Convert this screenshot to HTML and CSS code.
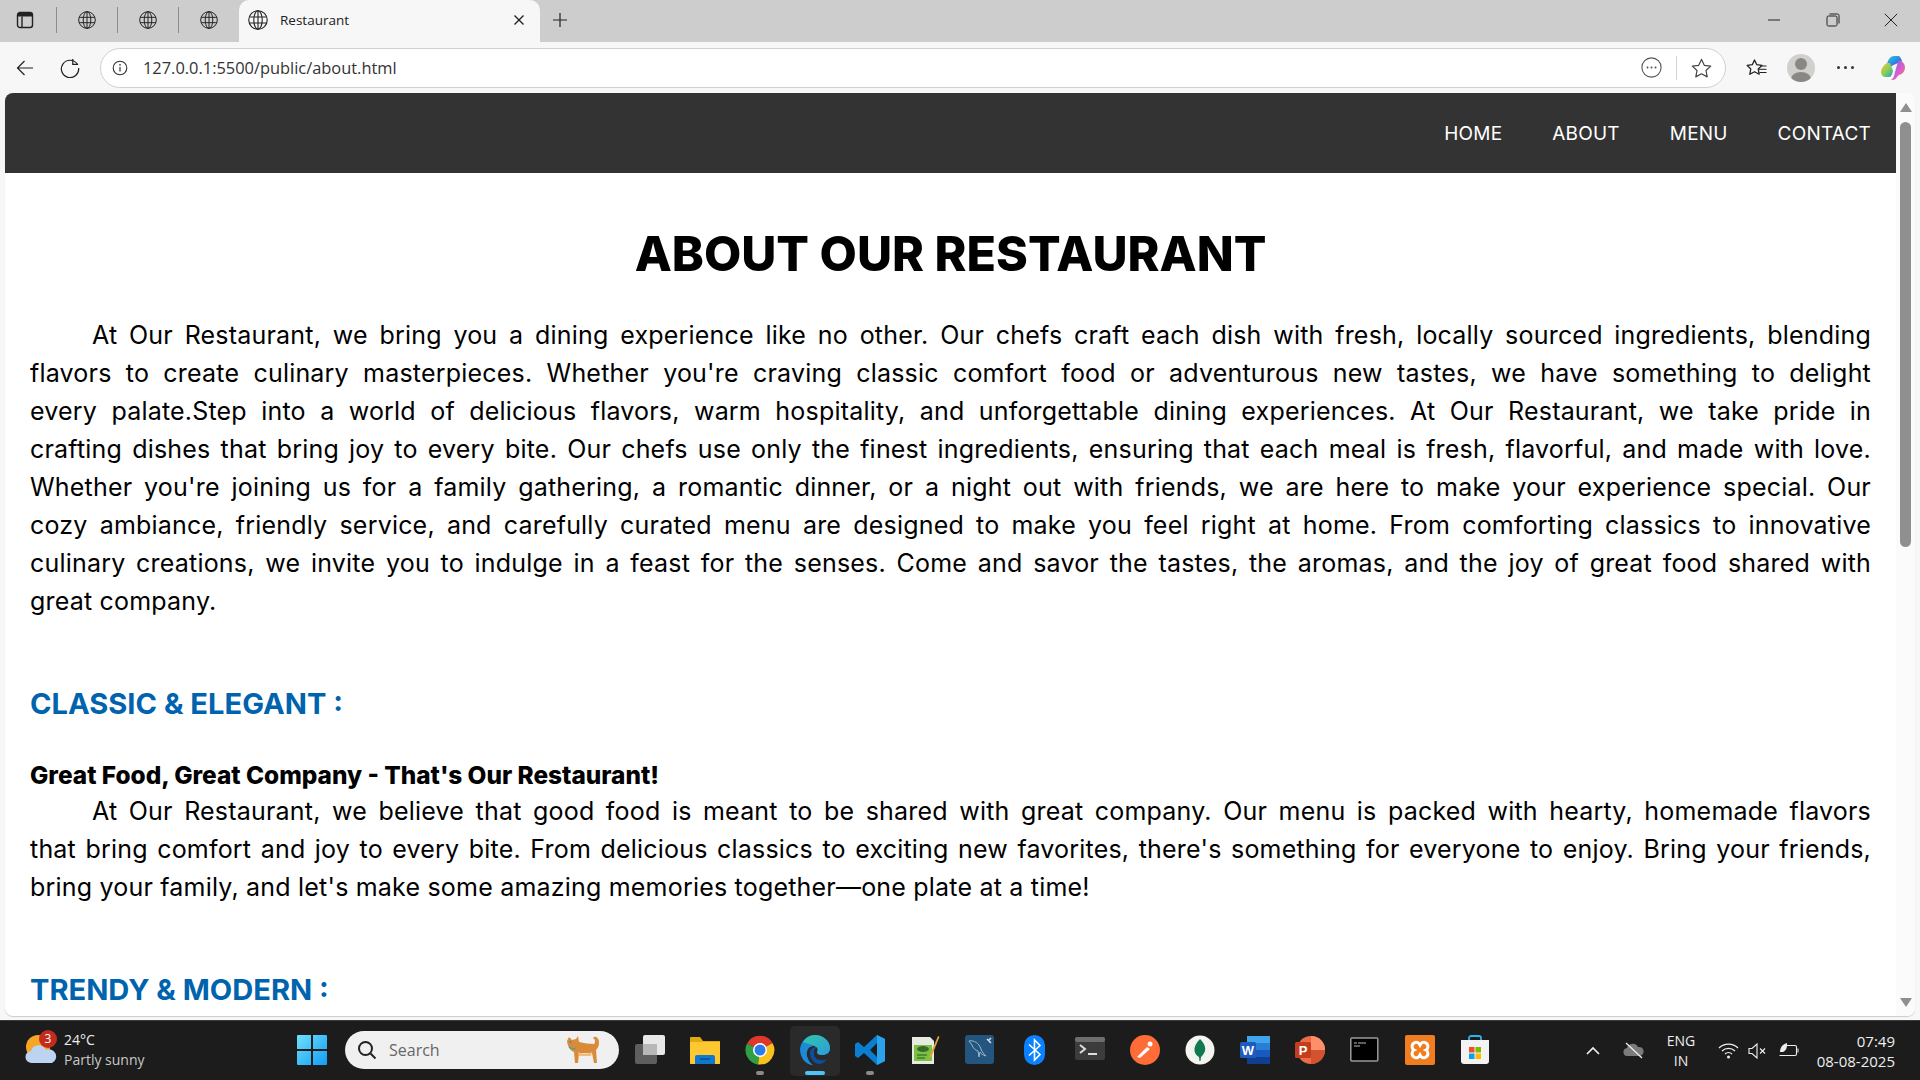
FILE: index.html
```html
<!DOCTYPE html>
<html lang="en">

<head>
    <meta charset="UTF-8">
    <meta name="viewport" content="width=device-width, initial-scale=1.0">
    <title>Restaurant</title>
    <link rel="stylesheet" href="styles.css">
</head>

<body>

    <div class="tabstrip">
        <div class="tab-mini">
            <svg width="18" height="18" viewBox="0 0 18 18"><rect x="1.5" y="1.5" width="15" height="15" rx="2.5" fill="none" stroke="#222" stroke-width="1.4"/><path d="M2 2h14v3.5H2z" fill="#222"/><path d="M6 5.5v11" stroke="#222" stroke-width="1.4"/></svg>
        </div>
        <div class="tab-mini sep">
            <svg class="globe" width="18" height="18" viewBox="0 0 18 18"><use href="#globe"/></svg>
        </div>
        <div class="tab-mini sep">
            <svg class="globe" width="18" height="18" viewBox="0 0 18 18"><use href="#globe"/></svg>
        </div>
        <div class="tab-mini sep">
            <svg class="globe" width="18" height="18" viewBox="0 0 18 18"><use href="#globe"/></svg>
        </div>
        <div class="tab-active">
            <svg class="globe" width="20" height="20" viewBox="0 0 18 18">
                <symbol id="globe" viewBox="0 0 18 18"><g fill="none" stroke="#222" stroke-width="1"><circle cx="9" cy="9" r="8.3"/><ellipse cx="9" cy="9" rx="3.8" ry="8.3"/><path d="M9 .7v16.600M1.300 6.300h15.400M1.300 11.700h15.400"/></g></symbol>
                <use href="#globe"/>
            </svg>
            <span class="tab-title">Restaurant</span>
            <svg width="12" height="12" viewBox="0 0 12 12"><path d="M1.500 1.500l9 9M10.500 1.500l-9 9" stroke="#222" stroke-width="1.400"/></svg>
        </div>
        <svg class="new-tab" width="16" height="16" viewBox="0 0 16 16"><path d="M8 1v14M1 8h14" stroke="#222" stroke-width="1.200"/></svg>
        <div class="win-btns">
            <svg width="14" height="14" viewBox="0 0 14 14"><path d="M1 7h12" stroke="#222" stroke-width="1"/></svg>
            <svg width="14" height="14" viewBox="0 0 14 14"><rect x="1" y="3" width="10" height="10" rx="1.500" fill="none" stroke="#222"/><path d="M3.500 1h8a1.500 1.500 0 0 1 1.500 1.500v8" fill="none" stroke="#222"/></svg>
            <svg width="14" height="14" viewBox="0 0 14 14"><path d="M.8.8l12.400 12.400M13.200.8L.8 13.200" stroke="#222"/></svg>
        </div>
    </div>

    <div class="toolbar">
        <svg class="tool-back" width="18" height="18" viewBox="0 0 18 18"><path d="M17 9H1.500M8.500 2L1.500 9l7 7" fill="none" stroke="#222" stroke-width="1.200"/></svg>
        <svg class="tool-reload" width="20" height="20" viewBox="0 0 18 18"><path d="M15.600 5.600A7.800 7.800 0 1 0 16.800 9" fill="none" stroke="#222" stroke-width="1.100"/><path d="M11.500 1v4.800h4.800" fill="none" stroke="#222" stroke-width="1.100"/></svg>
        <div class="address">
            <svg width="16" height="16" viewBox="0 0 16 16"><circle cx="8" cy="8" r="6.800" fill="none" stroke="#333" stroke-width="1.100"/><path d="M8 7v4.400" stroke="#333" stroke-width="1.200"/><circle cx="8" cy="4.900" r=".8" fill="#333"/></svg>
            <span class="url">127.0.0.1:5500/public/about.html</span>
            <svg class="addr-more" width="21" height="21" viewBox="0 0 21 21"><circle cx="10.500" cy="10.500" r="9.600" fill="none" stroke="#555" stroke-width="1.100"/><circle cx="6.500" cy="10.500" r="1" fill="#555"/><circle cx="10.500" cy="10.500" r="1" fill="#555"/><circle cx="14.500" cy="10.500" r="1" fill="#555"/></svg>
            <span class="addr-sep"></span>
            <svg width="21" height="20" viewBox="0 0 21 20"><path d="M10.500 1.400l2.800 5.900 6.400.8-4.700 4.400 1.200 6.400-5.700-3.100-5.700 3.100 1.200-6.400L1.300 8.100l6.400-.8z" fill="none" stroke="#444" stroke-width="1.200" stroke-linejoin="round"/></svg>
        </div>
        <svg class="tool-fav" width="21" height="20" viewBox="0 0 21 20"><path d="M8.500 2l2.300 4.700 5.200.7-3.800 3.600 1 5.200-4.700-2.500-4.700 2.500 1-5.200L1.100 7.400l5.200-.7z" fill="none" stroke="#222" stroke-width="1.300" stroke-linejoin="round"/><path d="M14 8h6.500M13 11.300h7.500M13.500 14.500h7" stroke="#222"/></svg>
        <div class="avatar"><span class="avatar-head"></span><span class="avatar-body"></span></div>
        <div class="dots"><i></i><i></i><i></i></div>
        <svg class="copilot" width="28" height="28" viewBox="0 0 28 28">
            <defs>
                <linearGradient id="cpa" x1="0" y1="0" x2="1" y2="1"><stop offset="0" stop-color="#37c6e8"/><stop offset=".6" stop-color="#2a7de1"/><stop offset="1" stop-color="#1b4fb8"/></linearGradient>
                <linearGradient id="cpb" x1="0" y1="0" x2="1" y2="1"><stop offset="0" stop-color="#f9c23c"/><stop offset=".5" stop-color="#8cd050"/><stop offset="1" stop-color="#20a0c8"/></linearGradient>
                <linearGradient id="cpc" x1="0" y1="0" x2="1" y2="1"><stop offset="0" stop-color="#8a5ce6"/><stop offset=".6" stop-color="#d95fc8"/><stop offset="1" stop-color="#f9864a"/></linearGradient>
            </defs>
            <path d="M8 10c1-4 3-8 7-8h4c2 0 3 2 4 5l-6 3c-3 1-5 2-6 4z" fill="url(#cpa)"/>
            <path d="M8 9c-2 1-6 5-6 9 0 3 2 5 5 5h3c2 0 3-2 4-6l-3-8z" fill="url(#cpb)"/>
            <path d="M20 6c3 1 6 4 6 7 0 4-2 7-6 8-2 1-3 5-6 5h-2c2-1 3-3 4-8l2-7z" fill="url(#cpc)"/>
        </svg>
    </div>

    <div class="viewport">
        <div class="page">
            <nav class="navbar">
                <a href="#">HOME</a>
                <a href="#">ABOUT</a>
                <a href="#">MENU</a>
                <a href="#">CONTACT</a>
            </nav>

            <main class="about">
                <h1>ABOUT OUR RESTAURANT</h1>
                <p class="indent">At Our Restaurant, we bring you a dining experience like no other. Our chefs craft each dish with fresh, locally sourced ingredients, blending<br>
                flavors to create culinary masterpieces. Whether you're craving classic comfort food or adventurous new tastes, we have something to delight<br>
                every palate.Step into a world of delicious flavors, warm hospitality, and unforgettable dining experiences. At Our Restaurant, we take pride in<br>
                crafting dishes that bring joy to every bite. Our chefs use only the finest ingredients, ensuring that each meal is fresh, flavorful, and made with love.<br>
                Whether you're joining us for a family gathering, a romantic dinner, or a night out with friends, we are here to make your experience special. Our<br>
                cozy ambiance, friendly service, and carefully curated menu are designed to make you feel right at home. From comforting classics to innovative<br>
                culinary creations, we invite you to indulge in a feast for the senses. Come and savor the tastes, the aromas, and the joy of great food shared with
                <span class="tail">great company.</span></p>

                <h2>CLASSIC &amp; ELEGANT :</h2>
                <h3>Great Food, Great Company - That's Our Restaurant!</h3>
                <p class="indent">At Our Restaurant, we believe that good food is meant to be shared with great company. Our menu is packed with hearty, homemade flavors<br>
                that bring comfort and joy to every bite. From delicious classics to exciting new favorites, there's something for everyone to enjoy. Bring your friends,
                <span class="tail">bring your family, and let's make some amazing memories together—one plate at a time!</span></p>

                <h2>TRENDY &amp; MODERN :</h2>
            </main>
        </div>
        <div class="scrollbar">
            <span class="arrow-up"></span>
            <div class="track"><div class="thumb"></div></div>
            <span class="arrow-down"></span>
        </div>
    </div>

    <footer class="taskbar">
        <div class="weather">
            <svg width="34" height="36" viewBox="0 0 34 36">
                <circle cx="14" cy="15" r="12" fill="#f5a623"/>
                <path d="M8 31a6 6 0 0 1-1-12 8 8 0 0 1 15-1 6.500 6.500 0 0 1 6 13z" fill="#bcd4f2"/>
            </svg>
            <span class="badge">3</span>
            <div class="weather-text">
                <span>24°C</span>
                <span class="weather-sub">Partly sunny</span>
            </div>
        </div>
        <div class="task-center">
            <svg class="task-icon win" width="30" height="30" viewBox="0 0 30 30">
                <defs><linearGradient id="winb" x1="0" y1="0" x2="1" y2="1"><stop offset="0" stop-color="#6fe0fb"/><stop offset="1" stop-color="#119cf5"/></linearGradient></defs>
                <path d="M0 1a1 1 0 0 1 1-1h13v14H0zM16 0h13a1 1 0 0 1 1 1v13H16zM0 16h14v14H1a1 1 0 0 1-1-1zM16 16h14v13a1 1 0 0 1-1 1H16z" fill="url(#winb)"/>
            </svg>
            <div class="search">
                <svg width="20" height="20" viewBox="0 0 20 20"><circle cx="8.500" cy="8.500" r="6.500" fill="none" stroke="#222" stroke-width="2"/><path d="M13 13l5.500 5.500" stroke="#222" stroke-width="2"/></svg>
                <span class="search-label">Search</span>
                <svg class="cat" width="36" height="36" viewBox="0 0 36 36">
                    <path d="M2 9l2-4 3 3 4-1 2-3 1 6c5 1 11 2 15 2 2-2 1-5-1-6 2-3 6 0 6 4 0 4-1 6-3 8l1 13h-3l-2-10H14l-1 10h-3l-1-11c-3-1-6-4-7-11z" fill="#d98b3a"/>
                    <path d="M13 20c5 2 9 2 14 0l-1 4H14z" fill="#f0bd7c"/>
                    <circle cx="5.500" cy="10" r=".9" fill="#2b8cc4"/>
                    <path d="M4 15c2 2 4 2 7 1" fill="none" stroke="#3aa6a6" stroke-width="1.300"/>
                </svg>
            </div>
            <svg class="task-icon" width="30" height="30" viewBox="0 0 30 30">
                <rect x="0" y="9" width="22" height="20" rx="2" fill="#5e5e5e"/>
                <rect x="8" y="0" width="22" height="20" rx="2" fill="#e8e8e8"/>
                <rect x="8" y="9" width="14" height="11" fill="#b8b8b8"/>
            </svg>
            <svg class="task-icon" width="30" height="30" viewBox="0 0 30 30">
                <path d="M0 3a1 1 0 0 1 1-1h9l3 4h17v22a1 1 0 0 1-1 1H1a1 1 0 0 1-1-1z" fill="#e3a90f"/>
                <path d="M0 7h30v21a1 1 0 0 1-1 1H1a1 1 0 0 1-1-1z" fill="#fdc830"/>
                <path d="M5 22a2 2 0 0 1 2-2h16a2 2 0 0 1 2 2v7H5z" fill="#0f79d1"/>
                <path d="M10 24h10" stroke="#0a4f8f" stroke-width="1.500"/>
            </svg>
            <div class="task-slot">
                <svg class="task-icon" width="30" height="30" viewBox="0 0 30 30">
                    <path d="M15 15L27.500 8A14.500 14.500 0 0 0 2 8.500z" fill="#e0372b"/>
                    <path d="M15 15L2 8.500A14.500 14.500 0 0 0 13 29.400z" fill="#2f9e44"/>
                    <path d="M15 15l-2 14.400A14.500 14.500 0 0 0 27.500 8z" fill="#f8c11c"/>
                    <circle cx="15" cy="15" r="7" fill="#fff"/>
                    <circle cx="15" cy="15" r="5.500" fill="#2c7bea"/>
                </svg>
                <i class="run-dot"></i>
            </div>
            <div class="task-slot active">
                <svg class="task-icon" width="30" height="30" viewBox="0 0 30 30">
                    <defs><linearGradient id="edg" x1="0" y1="0" x2="1" y2="1"><stop offset="0" stop-color="#32c7a4"/><stop offset="1" stop-color="#2d9be0"/></linearGradient></defs>
                    <path d="M0 14C1 6 7 0 15 0c8 0 15 6 15 13 0 5-4 7-8 7-3 0-5-1-5-3 2-2 1-6-3-6-5 0-8 4-7 10 1 4 3 7 6 9C6 30 0 23 0 14z" fill="#1c8ad8"/>
                    <path d="M15 0c8 0 15 6 15 13 0 5-4 7-8 7-3 0-5-1-5-3 1-1 1-4-1-5C13 9 7 9 3 7 6 3 10 0 15 0z" fill="url(#edg)"/>
                    <path d="M10 18c0 5 3 9 8 11 4 0 7-2 9-5-3 2-10 2-12-2-1-2-1-4-1-5 0-2 1-4 3-5-4 0-7 2-7 6z" fill="#0d4f9e"/>
                </svg>
                <i class="run-bar"></i>
            </div>
            <div class="task-slot">
                <svg class="task-icon" width="30" height="30" viewBox="0 0 30 30">
                    <path d="M22 0l8 4v22l-8 4-13-12-6 5-3-2V9l3-2 6 5zM22 8l-7 7 7 7z" fill-rule="evenodd" fill="#0a7fd0"/>
                    <path d="M22 0l8 4v22l-8 4z" fill="#2aa3ea"/>
                </svg>
                <i class="run-dot"></i>
            </div>
            <svg class="task-icon" width="30" height="30" viewBox="0 0 30 30">
                <path d="M2 2h18l4 4v23H2z" fill="#e8ece0"/>
                <rect x="4" y="10" width="18" height="16" fill="#7cc142"/>
                <ellipse cx="13" cy="14" rx="6" ry="3" fill="#3b6b2a"/>
                <path d="M19 22L28 1l1.500 .7L21 23z" fill="#d9a441"/>
                <path d="M7 20h10M7 23h8" stroke="#2c5a1e" stroke-width="1.200"/>
            </svg>
            <svg class="task-icon" width="30" height="30" viewBox="0 0 30 30">
                <rect width="29" height="29" rx="3" fill="#23557e"/>
                <path d="M4 6c5-1 10 2 12 8 1 3 3 5 5 7-3-1-5-2-6-4l-1 5-1-6c-3-1-5-3-6-6-1-1-2-3-3-4z" fill="none" stroke="#9db8cd" stroke-width="1"/>
                <path d="M22 4l4 4M26 3l-3 3" stroke="#d5dee5" stroke-width="1.500"/>
            </svg>
            <svg class="task-icon" width="30" height="30" viewBox="0 0 30 30">
                <rect x="4" y="0" width="21" height="30" rx="10.500" fill="#0a82ff"/>
                <path d="M9 9.500l11 10-5.500 5.500V5L20 10.500l-11 10" fill="none" stroke="#fff" stroke-width="1.600"/>
            </svg>
            <svg class="task-icon" width="30" height="30" viewBox="0 0 30 30">
                <rect y="2" width="30" height="23" rx="2" fill="#3c3c3c"/>
                <rect y="2" width="30" height="5" rx="2" fill="#6e6e6e"/>
                <path d="M5 10l5 4-5 4" fill="none" stroke="#ddd" stroke-width="2"/>
                <path d="M13 19h9" stroke="#ddd" stroke-width="2"/>
            </svg>
            <svg class="task-icon" width="30" height="30" viewBox="0 0 30 30">
                <circle cx="15" cy="15" r="15" fill="#ff6c37"/>
                <path d="M7 22l10-10 3 2-10 9z" fill="#fff"/>
                <circle cx="20" cy="9" r="2.500" fill="#fff"/>
            </svg>
            <svg class="task-icon" width="30" height="30" viewBox="0 0 30 30">
                <circle cx="15" cy="15" r="14.500" fill="#f4f4f0"/>
                <path d="M15 4c4 4 6 8 5 12-1 3-3 5-4 6l-.5 4h-1l-.5-4c-2-1-4-3-4.500-6C9 12 11 8 15 4z" fill="#0f7a4e"/>
            </svg>
            <svg class="task-icon" width="30" height="30" viewBox="0 0 30 30">
                <rect x="7" y="1" width="23" height="7" fill="#41a5ee"/>
                <rect x="7" y="8" width="23" height="7" fill="#2b7cd3"/>
                <rect x="7" y="15" width="23" height="7" fill="#185abd"/>
                <rect x="7" y="22" width="23" height="7" fill="#103f91"/>
                <rect y="7" width="16" height="16" rx="1.500" fill="#1f5bbd"/>
                <text class="icon-letter" x="8" y="19.500">W</text>
            </svg>
            <svg class="task-icon" width="30" height="30" viewBox="0 0 30 30">
                <circle cx="16" cy="15" r="14" fill="#ed6c47"/>
                <path d="M16 1a14 14 0 0 1 14 14H16z" fill="#ff8f6b"/>
                <path d="M16 15h14a14 14 0 0 1-14 14z" fill="#d35230"/>
                <rect x="0" y="7" width="16" height="16" rx="1.500" fill="#c43e1c"/>
                <text class="icon-letter" x="8" y="19.500">P</text>
            </svg>
            <svg class="task-icon" width="30" height="30" viewBox="0 0 30 30">
                <rect x=".8" y="3" width="27" height="23" rx="1" fill="#000" stroke="#9a9a9a" stroke-width="1.500"/>
                <path d="M4 8h3M4 11h6M8 8h8" stroke="#bbb"/>
            </svg>
            <svg class="task-icon" width="30" height="30" viewBox="0 0 30 30">
                <rect width="30" height="30" rx="2" fill="#f07d20"/>
                <path d="M9 8c3-2 5 0 6 2 1-2 3-4 6-2 3 2 2 6 0 7 2 1 3 5 0 7-3 2-5 0-6-2-1 2-3 4-6 2-3-2-2-6 0-7-2-1-3-5 0-7z" fill="none" stroke="#fff" stroke-width="3"/>
            </svg>
            <svg class="task-icon" width="30" height="30" viewBox="0 0 30 30">
                <path d="M9 5V3a2 2 0 0 1 2-2h8a2 2 0 0 1 2 2v2" fill="none" stroke="#2ab4ea" stroke-width="1.800"/>
                <path d="M1 5h28v21a3 3 0 0 1-3 3H4a3 3 0 0 1-3-3z" fill="#f3f3f3"/>
                <rect x="9" y="12" width="5.500" height="5.500" fill="#f25022"/>
                <rect x="15.500" y="12" width="5.500" height="5.500" fill="#7fba00"/>
                <rect x="9" y="18.500" width="5.500" height="5.500" fill="#00a4ef"/>
                <rect x="15.500" y="18.500" width="5.500" height="5.500" fill="#ffb900"/>
            </svg>
        </div>
        <div class="tray">
            <svg width="14" height="9" viewBox="0 0 14 9"><path d="M1 8l6-6 6 6" fill="none" stroke="#eee" stroke-width="1.700"/></svg>
            <svg class="tray-cloud" width="21" height="17" viewBox="0 0 21 17"><path d="M5 14a4 4 0 0 1-1-8 6 6 0 0 1 11-1 4.500 4.500 0 0 1 2 9z" fill="#7b7b7b"/><path d="M3 1l16 15" stroke="#eee" stroke-width="1.300"/></svg>
            <div class="lang"><span>ENG</span><span>IN</span></div>
            <div class="tray-icons">
                <svg width="21" height="17" viewBox="0 0 21 17"><g fill="none" stroke="#eee" stroke-width="1.300"><path d="M1 6a13.500 13.500 0 0 1 19 0"/><path d="M4 9a9.300 9.300 0 0 1 13 0"/><path d="M7 12a5 5 0 0 1 7 0"/></g><circle cx="10.500" cy="15" r="1.500" fill="#eee"/></svg>
                <svg width="20" height="16" viewBox="0 0 20 16"><path d="M1 5.500h3L9 1v14l-5-4.500H1z" fill="none" stroke="#eee" stroke-width="1.100"/><path d="M12 5.500l5 5M17 5.500l-5 5" stroke="#eee" stroke-width="1.100"/></svg>
                <svg width="21" height="17" viewBox="0 0 21 17"><path d="M7 3.500h10a1.500 1.500 0 0 1 1.500 1.500v7a1.500 1.500 0 0 1-1.500 1.500H1.500" fill="none" stroke="#eee" stroke-width="1.100"/><path d="M19.500 6.500h1v4h-1" fill="#eee"/><path d="M2 10c0-5 3-8 7-9 0 4 0 7-4 9z" fill="#eee"/></svg>
            </div>
            <div class="clock"><span>07:49</span><span>08-08-2025</span></div>
        </div>
    </footer>

</body>

</html>
```

FILE: styles.css
```css
* {
    box-sizing: border-box;
}

html,
body {
    height: 100%;
}

body {
    margin: 0;
    height: 1080px;
    overflow: hidden;
    display: flex;
    flex-direction: column;
    background-color: #f7f7f7;
    font-family: "Open Sans", "Noto Sans", sans-serif;
}

svg {
    display: block;
    flex-shrink: 0;
}

/* browser tabs */
.tabstrip {
    height: 42px;
    display: flex;
    align-items: center;
    background-color: #cdcdcd;
    padding: 0 0 2px 13px;
}

.tab-mini {
    width: 61px;
    height: 26px;
    display: flex;
    align-items: center;
    padding-left: 21px;
}

.tab-mini.sep {
    border-left: 1px solid #8d8d8d;
}

.tab-mini:first-child {
    width: 43px;
    padding-left: 3px;
}

.tab-active {
    width: 301px;
    height: 42px;
    margin-bottom: -2px;
    display: flex;
    align-items: center;
    padding: 0 15px 2px 9px;
    background-color: #f7f7f7;
    border-radius: 10px 10px 0 0;
}

.tab-title {
    flex: 1;
    margin-left: 12px;
    font-size: 13.5px;
    color: #222;
}

.new-tab {
    margin-left: 12px;
}

.win-btns {
    margin-left: auto;
    width: 190px;
    padding: 0 22px 0 37px;
    display: flex;
    justify-content: space-between;
}

/* address bar */
.toolbar {
    height: 51px;
    display: flex;
    align-items: center;
    padding: 0 13px 0 16px;
}

.tool-back {
    margin-right: 26px;
}

.tool-reload {
    margin-right: 20px;
}

.address {
    flex: 1;
    height: 40px;
    margin-right: 20px;
    display: flex;
    align-items: center;
    gap: 11px;
    padding: 0 13px 0 11px;
    background-color: #fff;
    border: 1px solid #d0d0d0;
    border-radius: 20px;
}

.url {
    flex: 1;
    margin-left: 4px;
    font-size: 16.4px;
    color: #333;
}

.addr-sep {
    width: 1px;
    height: 24px;
    margin: 0 3px;
    background-color: #d5d5d5;
}

.tool-fav {
    margin-right: 20px;
}

.avatar {
    position: relative;
    width: 28px;
    height: 28px;
    margin-right: 22px;
    border-radius: 50%;
    background-color: #d2d0cc;
    overflow: hidden;
}

.avatar-head {
    position: absolute;
    left: 8px;
    top: 4px;
    width: 12px;
    height: 12px;
    border-radius: 50%;
    background-color: #8a8885;
}

.avatar-body {
    position: absolute;
    left: 4px;
    top: 18px;
    width: 20px;
    height: 14px;
    border-radius: 50%;
    background-color: #8a8885;
}

.dots {
    display: flex;
    gap: 4px;
    margin-right: 25px;
}

.dots i {
    width: 3px;
    height: 3px;
    border-radius: 50%;
    background-color: #333;
}

/* page */
.viewport {
    height: 923px;
    margin: 0 5px;
    display: flex;
    background-color: #fff;
    border-radius: 8px;
    box-shadow: 0 1px 1px rgba(0, 0, 0, 0.18);
    overflow: hidden;
}

.page {
    flex: 1;
    min-width: 0;
    font-family: Inter, sans-serif;
}

.navbar {
    height: 80px;
    display: flex;
    justify-content: flex-end;
    align-items: center;
    gap: 50px;
    padding-right: 25px;
    background-color: #333;
}

.navbar a {
    color: #fff;
    font-size: 19px;
    letter-spacing: 0.2px;
    text-decoration: none;
}

.about {
    padding: 51px 25px 0;
    color: #000;
}

.about h1 {
    margin: 0 0 32px;
    text-align: center;
    font-size: 48.3px;
    line-height: 60px;
    font-weight: 800;
}

.about p {
    margin: 0;
    font-size: 25px;
    line-height: 38px;
    letter-spacing: 0.2px;
    text-align: justify;
    text-align-last: justify;
}

.indent {
    text-indent: 62px;
}

.tail {
    display: block;
    text-indent: 0;
    text-align-last: left;
}

.about h2 {
    margin: 61px 0 0;
    color: #0063ae;
    font-size: 29.1px;
    line-height: 46px;
    font-weight: 700;
}

.about h3 {
    margin: 31.5px 0 0;
    font-size: 24.4px;
    line-height: 33px;
    font-weight: 800;
}

.scrollbar {
    width: 19px;
    display: flex;
    flex-direction: column;
    align-items: center;
    padding: 10px 0 9px;
    background-color: #fbfbfb;
}

.track {
    flex: 1;
    width: 100%;
    padding: 10px 4px 0;
}

.thumb {
    height: 425px;
    border-radius: 6px;
    background-color: #8f8f8f;
}

.arrow-up {
    width: 0;
    height: 0;
    border-left: 6px solid transparent;
    border-right: 6px solid transparent;
    border-bottom: 9px solid #8f8f8f;
}

.arrow-down {
    width: 0;
    height: 0;
    border-left: 6px solid transparent;
    border-right: 6px solid transparent;
    border-top: 9px solid #8f8f8f;
}

/* windows taskbar */
.taskbar {
    position: relative;
    height: 60px;
    margin-top: 4px;
    background-color: #1c1c1c;
    border-top: 1px solid #3a3a3a;
    color: #eee;
    font-family: "Open Sans", sans-serif;
    font-size: 14px;
}

.weather {
    position: absolute;
    left: 24px;
    top: 9px;
    display: flex;
    align-items: center;
    gap: 6px;
}

.badge {
    position: absolute;
    left: 15px;
    top: 0;
    width: 18px;
    height: 18px;
    border-radius: 50%;
    background-color: #c42b1c;
    color: #fff;
    font-size: 12px;
    line-height: 18px;
    text-align: center;
}

.weather-text {
    display: flex;
    flex-direction: column;
    line-height: 20px;
}

.weather-sub {
    color: #c8c8c8;
}

.task-center {
    position: absolute;
    left: 297px;
    top: 10px;
    display: flex;
    align-items: center;
    gap: 25px;
}

.task-icon.win {
    margin-right: -7px;
}

.search {
    width: 274px;
    height: 38px;
    margin-right: -9px;
    display: flex;
    align-items: center;
    padding: 0 18px 0 12px;
    background-color: #f0f0f0;
    border-radius: 19px;
}

.search-label {
    flex: 1;
    margin-left: 12px;
    font-size: 16px;
    color: #666;
}

.task-slot {
    position: relative;
}

.task-slot.active::before {
    content: "";
    position: absolute;
    left: -10px;
    top: -9px;
    width: 50px;
    height: 50px;
    border-radius: 5px;
    background-color: #2a2a2a;
}

.task-slot .task-icon {
    position: relative;
}

.run-dot {
    position: absolute;
    left: 11px;
    top: 36px;
    width: 8px;
    height: 4px;
    border-radius: 2px;
    background-color: #8a8a8a;
}

.run-bar {
    position: absolute;
    left: 5px;
    top: 36px;
    width: 20px;
    height: 4px;
    border-radius: 2px;
    background-color: #4fc3f7;
}

.icon-letter {
    font-family: "Liberation Sans", sans-serif;
    font-size: 13px;
    font-weight: 700;
    fill: #fff;
    text-anchor: middle;
}

.tray {
    position: absolute;
    right: 25px;
    top: 0;
    height: 59px;
    display: flex;
    align-items: center;
}

.tray-cloud {
    margin-left: 22.5px;
}

.lang {
    width: 60px;
    margin-left: 7.5px;
    display: flex;
    flex-direction: column;
    align-items: center;
    line-height: 20px;
}

.tray-icons {
    display: flex;
    align-items: center;
    gap: 9.5px;
    margin-left: 6.5px;
}

.clock {
    width: 90px;
    margin-left: 6.5px;
    display: flex;
    flex-direction: column;
    align-items: flex-end;
    font-size: 15px;
    line-height: 20px;
}
```
